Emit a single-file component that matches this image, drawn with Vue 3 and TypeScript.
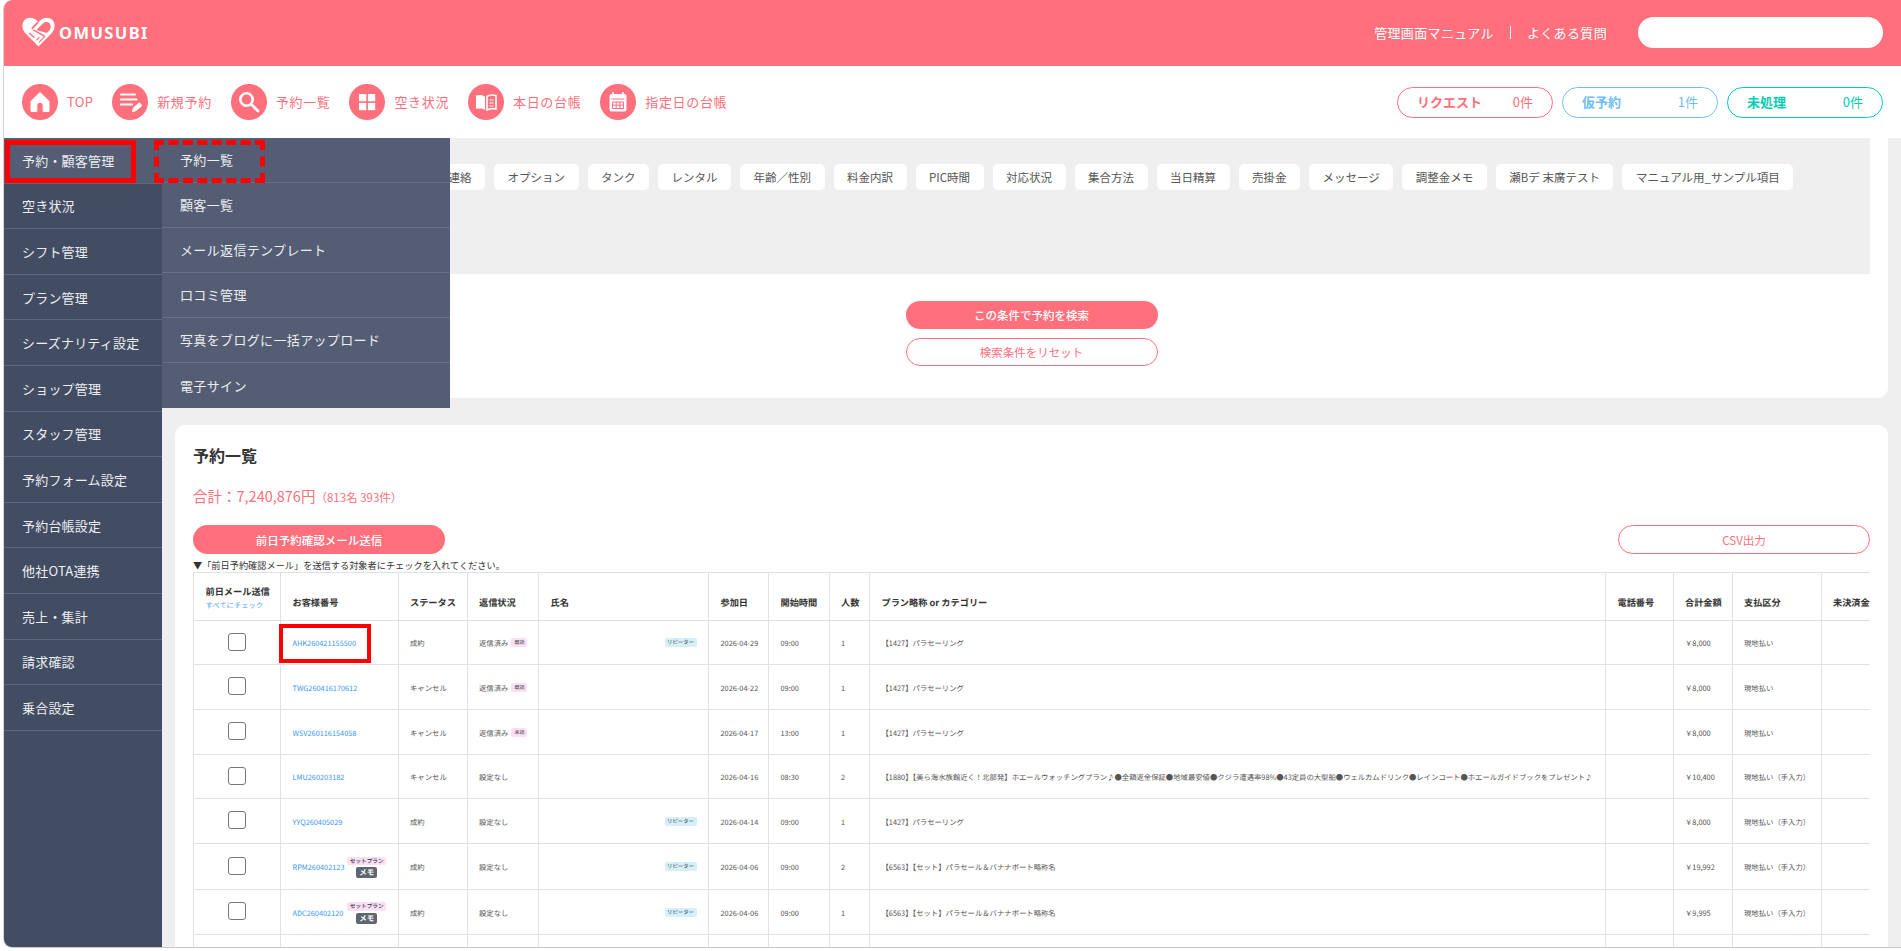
<template>
  <div class="app">
    <header class="top">
      <div class="logo">
        <svg width="33" height="30" viewBox="0 0 32 29">
          <path d="M16 28.500 3 15.500C-1 10.500 -.5 3.500 5 1.200 9 -.3 13 1.500 16 5c3-3.500 7-5.300 11-3.800 5.500 2.300 6 9.300 2 14.300z" fill="#fff" />
          <path d="M14 12.500 20 6.500c2.300-2 5-2.100 6.600-.4 1.800 2 1.700 4.800-.2 6.900l-2.400 2.500z" fill="#ff6f7c" />
          <path d="M9.500 11.500 15.500 5" stroke="#ff6f7c" stroke-width="1.800" fill="none" />
          <path d="M7 15.500 12 20M11 12.500l11.500 6.500" stroke="#ff6f7c" stroke-width="1.400" fill="none" />
          <path d="M14 22.500l3-3M16.500 24.500l3-3M19 22l2.500-2.500" stroke="#ff6f7c" stroke-width="1.100" fill="none" />
        </svg>
        <span class="logo-text">OMUSUBI</span>
      </div>
      <div class="top-right">
        <a class="top-link">管理画面マニュアル</a>
        <span class="top-sep" />
        <a class="top-link">よくある質問</a>
        <input class="top-search" type="text" />
      </div>
    </header>

    <nav class="nav">
      <div class="nav-links">
        <a class="nav-item first">
          <svg class="nav-icon" viewBox="0 0 36 36">
            <circle cx="18" cy="18" r="18" fill="#ff6f7c" />
            <path d="M18 8.500 27 17.300V27.500H21.200V21.500a3.200 3.200 0 0 0-6.400 0V27.500H9V17.300z" fill="#fff" stroke="#fff" stroke-width="1" stroke-linejoin="round" />
          </svg>
          <span>TOP</span>
        </a>
        <a class="nav-item">
          <svg class="nav-icon" viewBox="0 0 36 36">
            <circle cx="18" cy="18" r="18" fill="#ff6f7c" />
            <path d="M9 10.500h14M9 15.500h15.500M9 20.500h11" stroke="#fff" stroke-width="2.200" stroke-linecap="round" fill="none" />
            <path d="M20.500 27.500l.8-3.500 6-5.200 2.600 2.800-6 5.100z" fill="#fff" stroke="#fff" stroke-linejoin="round" />
          </svg>
          <span>新規予約</span>
        </a>
        <a class="nav-item">
          <svg class="nav-icon" viewBox="0 0 36 36">
            <circle cx="18" cy="18" r="18" fill="#ff6f7c" />
            <circle cx="15.500" cy="15.500" r="6.200" fill="none" stroke="#fff" stroke-width="2.600" />
            <path d="M20.500 20.500 27 27" stroke="#fff" stroke-width="2.800" stroke-linecap="round" />
          </svg>
          <span>予約一覧</span>
        </a>
        <a class="nav-item">
          <svg class="nav-icon" viewBox="0 0 36 36">
            <circle cx="18" cy="18" r="18" fill="#ff6f7c" />
            <rect x="10" y="10" width="7.300" height="7.300" fill="#fff" />
            <rect x="18.900" y="10" width="7.300" height="7.300" fill="#fff" />
            <rect x="10" y="18.900" width="7.300" height="7.300" fill="#fff" />
            <rect x="18.900" y="18.900" width="7.300" height="7.300" fill="#fff" />
          </svg>
          <span>空き状況</span>
        </a>
        <a class="nav-item">
          <svg class="nav-icon" viewBox="0 0 36 36">
            <circle cx="18" cy="18" r="18" fill="#ff6f7c" />
            <path d="M8 11.500c3.500-1 6.500-.6 9 1V26c-2.500-1.400-5.500-1.800-9-1z" fill="#fff" />
            <path d="M19 12.500c2-1.500 5-2 9-1V25c-3.500-.8-6.500-.4-9 1z" fill="none" stroke="#fff" stroke-width="1.600" />
            <path d="M21.500 16h4M21.500 19h4M21.500 22h4" stroke="#fff" stroke-width="1.200" />
          </svg>
          <span>本日の台帳</span>
        </a>
        <a class="nav-item">
          <svg class="nav-icon" viewBox="0 0 36 36">
            <circle cx="18" cy="18" r="18" fill="#ff6f7c" />
            <rect x="9.500" y="10" width="17" height="17.500" rx="2" fill="#fff" />
            <path d="M13 8v4M23 8v4" stroke="#fff" stroke-width="1.600" />
            <rect x="11.500" y="14.500" width="13" height="1" fill="#ff6f7c" />
            <path d="M12.500 18h11v6.500h-11zM16.200 18v6.500M19.900 18v6.500M12.500 21.200h11" fill="none" stroke="#ff6f7c" stroke-width="1" />
          </svg>
          <span>指定日の台帳</span>
        </a>
      </div>
      <div class="nav-counts">
        <a v-for="c in counts" :key="c.label" class="count" :class="c.kind">
          <strong>{{ c.label }}</strong>
          <span>{{ c.num }}件</span>
        </a>
      </div>
    </nav>

    <div class="body">
      <aside class="side">
        <a v-for="(item, i) in sideItems" :key="item" class="side-item" :class="{ active: i === 0 }">{{ item }}</a>
      </aside>

      <div class="submenu">
        <a v-for="item in subItems" :key="item" class="sub-item">{{ item }}</a>
      </div>
      <div class="mark mark-side" />
      <div class="mark mark-sub" />

      <main class="main">
        <section class="card search-card">
          <div class="panel">
            <div class="chips">
              <span v-for="c in chips" :key="c" class="chip">{{ c }}</span>
            </div>
          </div>
          <div class="search-btns">
            <button class="btn fill short">この条件で予約を検索</button>
            <button class="btn line short">検索条件をリセット</button>
          </div>
        </section>

        <section class="card list-card">
          <h2 class="title">予約一覧</h2>
          <p class="total">合計：7,240,876円<small>（813名 393件）</small></p>
          <div class="list-btns">
            <button class="btn fill">前日予約確認メール送信</button>
            <button class="btn line">CSV出力</button>
          </div>
          <p class="note">▼「前日予約確認メール」を送信する対象者にチェックを入れてください。</p>

          <div class="table-wrap">
            <table class="table">
              <colgroup>
                <col v-for="w in colWidths" :key="w.id" :style="{ width: w.px + 'px' }" />
              </colgroup>
              <thead>
                <tr>
                  <th class="th-check">
                    <div>前日メール送信</div>
                    <a class="check-all">すべてにチェック</a>
                  </th>
                  <th>お客様番号</th>
                  <th>ステータス</th>
                  <th>返信状況</th>
                  <th>氏名</th>
                  <th>参加日</th>
                  <th>開始時間</th>
                  <th>人数</th>
                  <th>プラン略称 or カテゴリー</th>
                  <th>電話番号</th>
                  <th>合計金額</th>
                  <th>支払区分</th>
                  <th>未決済金額</th>
                </tr>
              </thead>
              <tbody>
                <tr v-for="(r, i) in rows" :key="r.no" :style="{ height: r.h + 'px' }">
                  <td class="center"><input class="check" type="checkbox" /></td>
                  <td class="no-cell">
                    <div class="no-wrap">
                      <a class="no">{{ r.no }}</a>
                      <span v-if="r.set" class="no-tags">
                        <span class="tag-set">セットプラン</span>
                        <span class="tag-memo">メモ</span>
                      </span>
                    </div>
                    <div v-if="i === 0" class="mark mark-no" />
                  </td>
                  <td>{{ r.status }}</td>
                  <td>
                    {{ r.reply }}<span v-if="r.read" class="tag-read">{{ r.read }}</span>
                  </td>
                  <td><span v-if="r.repeat" class="tag-repeat">リピーター</span></td>
                  <td>{{ r.date }}</td>
                  <td>{{ r.time }}</td>
                  <td>{{ r.people }}</td>
                  <td class="plan">{{ r.plan }}</td>
                  <td></td>
                  <td>{{ r.amount }}</td>
                  <td>{{ r.pay }}</td>
                  <td></td>
                </tr>
                <tr class="empty">
                  <td v-for="w in colWidths" :key="w.id"></td>
                </tr>
              </tbody>
            </table>
          </div>
        </section>
      </main>
    </div>
  </div>
</template>

<script setup lang="ts">
interface Row {
  no: string
  status: string
  reply: string
  read?: string
  repeat?: boolean
  set?: boolean
  date: string
  time: string
  people: number
  plan: string
  amount: string
  pay: string
  h: number
}

const counts = [
  { label: 'リクエスト', num: 0, kind: 'pink' },
  { label: '仮予約', num: 1, kind: 'blue' },
  { label: '未処理', num: 0, kind: 'green' },
]

const sideItems = [
  '予約・顧客管理',
  '空き状況',
  'シフト管理',
  'プラン管理',
  'シーズナリティ設定',
  'ショップ管理',
  'スタッフ管理',
  '予約フォーム設定',
  '予約台帳設定',
  '他社OTA連携',
  '売上・集計',
  '請求確認',
  '乗合設定',
]

const subItems = ['予約一覧', '顧客一覧', 'メール返信テンプレート', '口コミ管理', '写真をブログに一括アップロード', '電子サイン']

const chips = [
  '連絡',
  'オプション',
  'タンク',
  'レンタル',
  '年齢／性別',
  '料金内訳',
  'PIC時間',
  '対応状況',
  '集合方法',
  '当日精算',
  '売掛金',
  'メッセージ',
  '調整金メモ',
  '瀬Bデ 末廣テスト',
  'マニュアル用_サンプル項目',
]

const colWidths = [87, 117.5, 69, 71.5, 170, 60, 60.5, 40.5, 736, 67.5, 59, 89, 120].map((px, id) => ({ id, px }))

const parasail = '【1427】パラセーリング'
const setPlan = '【6563】【セット】パラセール＆バナナボート略称名'
const longPlan =
  '【1880】【美ら海水族館近く！北部発】ホエールウォッチングプラン♪●全額返金保証●地域最安値●クジラ遭遇率98%●43定員の大型船●ウェルカムドリンク●レインコート●ホエールガイドブックをプレゼント♪'

const rows: Row[] = [
  { no: 'AHK260421155500', status: '成約', reply: '返信済み', read: '既読', repeat: true, date: '2026-04-29', time: '09:00', people: 1, plan: parasail, amount: '￥8,000', pay: '現地払い', h: 44 },
  { no: 'TWG260416170612', status: 'キャンセル', reply: '返信済み', read: '既読', date: '2026-04-22', time: '09:00', people: 1, plan: parasail, amount: '￥8,000', pay: '現地払い', h: 45 },
  { no: 'WSV260116154058', status: 'キャンセル', reply: '返信済み', read: '未読', date: '2026-04-17', time: '13:00', people: 1, plan: parasail, amount: '￥8,000', pay: '現地払い', h: 45 },
  { no: 'LMU260203182', status: 'キャンセル', reply: '設定なし', date: '2026-04-16', time: '08:30', people: 2, plan: longPlan, amount: '￥10,400', pay: '現地払い（手入力）', h: 44 },
  { no: 'YYQ260405029', status: '成約', reply: '設定なし', repeat: true, date: '2026-04-14', time: '09:00', people: 1, plan: parasail, amount: '￥8,000', pay: '現地払い（手入力）', h: 45 },
  { no: 'RPM260402123', status: '成約', reply: '設定なし', repeat: true, set: true, date: '2026-04-06', time: '09:00', people: 2, plan: setPlan, amount: '￥19,992', pay: '現地払い（手入力）', h: 46 },
  { no: 'ADC260402120', status: '成約', reply: '設定なし', repeat: true, set: true, date: '2026-04-06', time: '09:00', people: 1, plan: setPlan, amount: '￥9,995', pay: '現地払い（手入力）', h: 45 },
]
</script>

<style>
html,
body {
  background: #fff;
  overflow: hidden;
}
</style>

<style scoped>
.app {
  height: 948px;
  margin-left: 3px;
  box-sizing: border-box;
  display: flex;
  flex-direction: column;
  overflow: hidden;
  border-left: 1px solid #d4d4d4;
  border-bottom: 1px solid #c8c8c8;
  border-radius: 9px 0 0 9px;
  font-family: 'Noto Sans CJK JP', 'Noto Sans', sans-serif;
  color: #333;
}

a {
  text-decoration: none;
}

/* top bar */
.top {
  height: 66px;
  flex: none;
  display: flex;
  align-items: center;
  justify-content: space-between;
  padding: 0 18px 2px 18px;
  box-sizing: border-box;
  background: #ff6f7c;
}
.logo {
  display: flex;
  align-items: center;
  gap: 4px;
}
.logo-text {
  color: #fff;
  font-family: 'Noto Sans', sans-serif;
  font-size: 16.500px;
  font-weight: 700;
  letter-spacing: 1.400px;
}
.top-right {
  display: flex;
  align-items: center;
}
.top-link {
  color: #fff;
  font-size: 13px;
  letter-spacing: 0.350px;
}
.top-sep {
  width: 1px;
  height: 13px;
  margin: 0 16px;
  background: #fff;
}
.top-search {
  width: 245px;
  height: 31px;
  margin-left: 31px;
  box-sizing: border-box;
  border: 0;
  border-radius: 16px;
  background: #fff;
}

/* icon nav */
.nav {
  height: 72px;
  flex: none;
  display: flex;
  align-items: center;
  justify-content: space-between;
  padding: 0 18px;
  box-sizing: border-box;
  background: #fff;
}
.nav-links {
  display: flex;
  gap: 19px;
}
.nav-item {
  display: flex;
  align-items: center;
  gap: 9px;
  color: #ff6f7c;
  font-size: 13px;
  letter-spacing: 0.650px;
}
.nav-item.first {
  letter-spacing: 0.300px;
}
.nav-item span {
  margin-top: -2px;
}
.nav-icon {
  width: 36px;
  height: 36px;
}
.nav-counts {
  display: flex;
  gap: 9px;
}
.count {
  width: 156px;
  height: 31px;
  box-sizing: border-box;
  display: flex;
  align-items: center;
  justify-content: space-between;
  padding: 0 19px 2px;
  border: 1px solid currentColor;
  border-radius: 16px;
  font-size: 13px;
}
.count strong {
  font-weight: 700;
}
.count.pink {
  color: #ff6f7c;
}
.count.blue {
  color: #6fbdf9;
}
.count.green {
  color: #00cdb4;
}

/* body */
.body {
  position: relative;
  flex: 1;
  min-height: 0;
  display: flex;
  background: #efefef;
}
.side {
  width: 158px;
  flex: none;
  background: #424d63;
}
.side-item {
  display: flex;
  align-items: center;
  height: 45.600px;
  box-sizing: border-box;
  padding-left: 18px;
  border-bottom: 1px solid #5e677d;
  color: #eceef2;
  font-size: 13px;
  letter-spacing: 0.200px;
}
.side-item.active {
  background: #545d74;
}
.submenu {
  position: absolute;
  left: 158px;
  top: 0;
  z-index: 3;
  width: 288px;
  background: #545d74;
}
.sub-item {
  display: flex;
  align-items: center;
  height: 45px;
  box-sizing: border-box;
  padding: 0 0 1px 18px;
  border-bottom: 1px solid #677086;
  color: #eceef2;
  font-size: 13px;
  letter-spacing: 0.350px;
}
.sub-item:last-child {
  border-bottom: 0;
}
.mark {
  position: absolute;
  z-index: 4;
  box-sizing: border-box;
  pointer-events: none;
}
.mark-side {
  left: 1px;
  top: 2px;
  width: 131px;
  height: 43px;
  border: 5px solid #f00;
}
.mark-sub {
  left: 150px;
  top: 2px;
  width: 111px;
  height: 43px;
  border: 5px dashed #f00;
}
.mark-no {
  left: -2.500px;
  top: 2.500px;
  width: 92px;
  height: 39px;
  border: 4.500px solid #f00;
}

.main {
  flex: 1;
  min-width: 0;
  padding: 0 13px;
  overflow: hidden;
}
.card {
  background: #fff;
  padding: 0 18px;
}
.search-card {
  padding-bottom: 32px;
  border-radius: 0 0 10px 10px;
}
.panel {
  height: 136px;
  box-sizing: border-box;
  padding-top: 26px;
  background: #efefef;
}
.chips {
  display: flex;
  gap: 9px;
  padding-left: 242px;
}
.chip {
  height: 26px;
  flex: none;
  display: flex;
  align-items: center;
  padding: 0 13.500px 1px;
  box-sizing: border-box;
  background: #fff;
  border-radius: 5px;
  color: #555;
  font-size: 11.500px;
}
.search-btns {
  display: flex;
  flex-direction: column;
  align-items: center;
  gap: 9px;
  margin-top: 27px;
}
.btn {
  width: 252px;
  height: 29px;
  box-sizing: border-box;
  border-radius: 15px;
  font-family: inherit;
  font-size: 11.500px;
  padding: 0;
}
.btn.short {
  height: 28px;
}
.btn.fill {
  border: 0;
  background: #ff6f7c;
  color: #fff;
  font-weight: 500;
}
.btn.line {
  border: 1px solid #ff6f7c;
  background: #fff;
  color: #ff6f7c;
}

.list-card {
  margin-top: 27px;
  padding-top: 18px;
  border-radius: 10px 10px 0 0;
}
.title {
  margin: 0;
  font-size: 16px;
  line-height: 24px;
  font-weight: 700;
  color: #333;
}
.total {
  margin: 19px 0 0;
  color: #ff6f7c;
  font-size: 14.500px;
  line-height: 20px;
}
.total small {
  font-size: 11.500px;
}
.list-btns {
  display: flex;
  justify-content: space-between;
  margin-top: 18px;
}
.note {
  margin: 4px 0 0;
  font-size: 9.200px;
  line-height: 14px;
  color: #333;
}

.table-wrap {
  overflow: hidden;
}
.table {
  width: 1747px;
  table-layout: fixed;
  border-collapse: collapse;
  font-size: 7.350px;
  color: #555;
  text-rendering: geometricPrecision;
}
.table th,
.table td {
  position: relative;
  padding: 2px 11.500px 0;
  border: 1px solid #dee2e6;
  vertical-align: middle;
  text-align: left;
  white-space: nowrap;
  font-weight: 400;
}
.table th {
  height: 37px;
  padding-top: 10px;
  font-size: 9.200px;
  font-weight: 700;
  color: #333;
}
.table th.th-check {
  height: 45px;
  padding-top: 2px;
}
.check-all {
  display: block;
  margin-top: 3px;
  color: #4da3ff;
  font-size: 7.300px;
  font-weight: 400;
}
.table td.center {
  padding-top: 0;
  text-align: center;
}
.check {
  appearance: none;
  display: block;
  width: 18px;
  height: 18px;
  margin: 0 auto 2px;
  box-sizing: border-box;
  border: 1.500px solid #777;
  border-radius: 3px;
  background: #fff;
}
.no-wrap {
  display: flex;
  align-items: center;
  justify-content: space-between;
}
.no {
  color: #3b98f5;
}
.no-tags {
  display: flex;
  flex-direction: column;
  align-items: center;
  gap: 2px;
}
.tag-set {
  padding: 0 2.500px;
  height: 8.500px;
  line-height: 8.500px;
  background: #fbdff6;
  border-radius: 2px;
  color: #333;
  font-size: 5.600px;
  font-weight: 500;
}
.tag-memo {
  width: 21px;
  height: 11px;
  line-height: 11px;
  text-align: center;
  background: #5f6670;
  border-radius: 2px;
  color: #fff;
  font-size: 7.500px;
  font-weight: 700;
}
.tag-read {
  display: inline-block;
  margin-left: 3px;
  padding: 0 3px;
  height: 9px;
  line-height: 9px;
  vertical-align: 2px;
  background: #fbdff6;
  border-radius: 2px;
  color: #333;
  font-size: 5px;
}
.tag-repeat {
  float: right;
  width: 32px;
  height: 9px;
  margin-top: -2px;
  line-height: 9px;
  text-align: center;
  background: #d3f0fb;
  border-radius: 2px;
  color: #333;
  font-size: 5.400px;
}
.plan {
  color: #555;
}
.empty {
  height: 40px;
}
</style>
